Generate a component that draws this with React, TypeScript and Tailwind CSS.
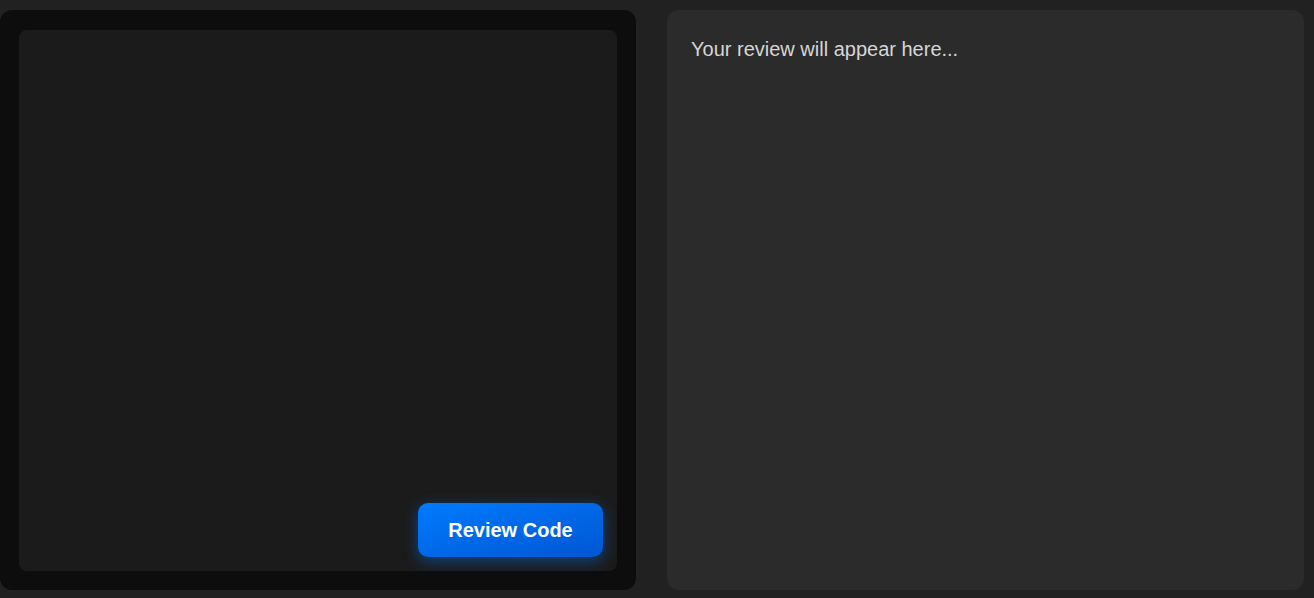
export default function App() {
  return (
    <div className="min-h-screen w-full bg-[#212121] font-['Liberation_Sans',Arial,sans-serif]">
      <main className="flex h-[600px] gap-[31px] py-[10px] pr-[10px]">
        {/* editor side */}
        <div className="flex w-[636px] shrink-0 rounded-xl bg-[#0c0d0c] px-[19px] pt-[20px] pb-[19px]">
          <div className="relative flex-1 rounded-lg bg-[#1b1b1b]">
            <button
              type="button"
              className="absolute bottom-[14px] right-[14px] h-[54px] w-[185px] rounded-[10px] bg-gradient-to-br from-[#007bff] to-[#0056d2] text-[20px] font-bold text-white shadow-[0_4px_15px_rgba(0,123,255,0.45)]"
            >
              Review Code
            </button>
          </div>
        </div>

        {/* review output */}
        <div className="min-w-0 flex-1 rounded-xl bg-[#2b2b2b] p-6 text-[20px] leading-[1.5] text-[#d6d6d6]">
          Your review will appear here...
        </div>
      </main>
    </div>
  );
}
